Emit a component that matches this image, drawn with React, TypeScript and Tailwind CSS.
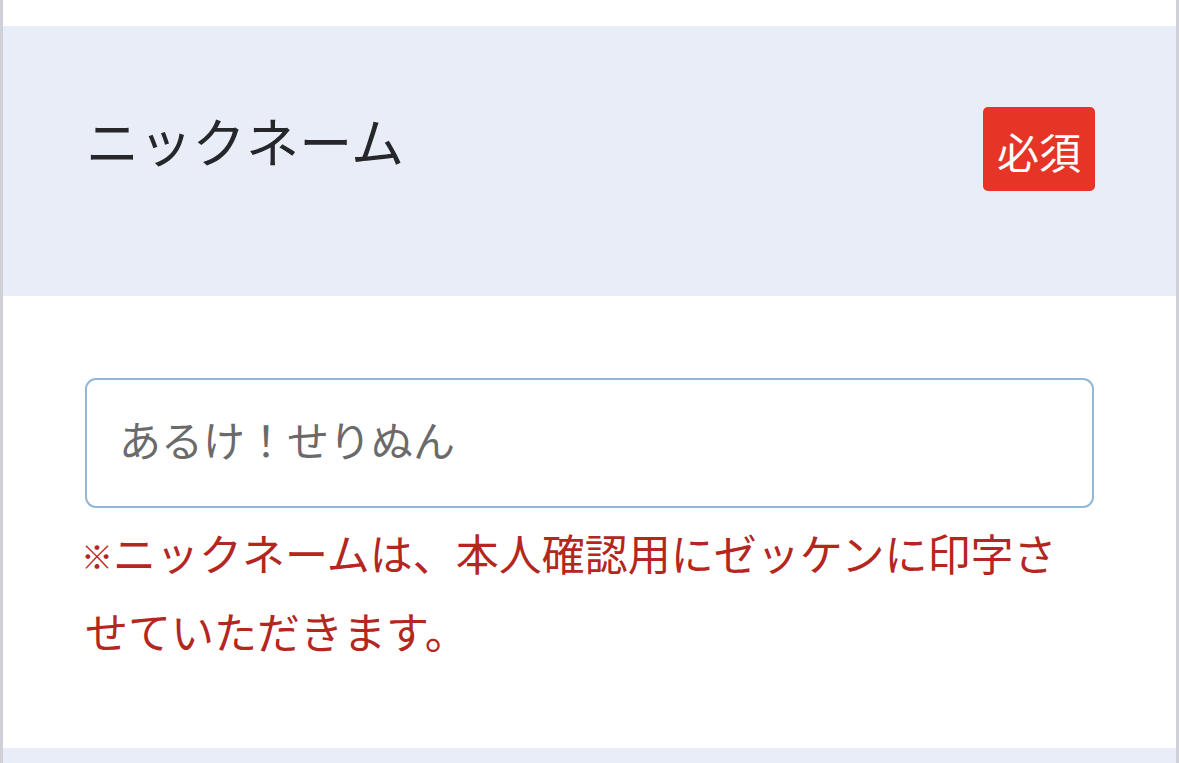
import React from "react";

export default function App() {
  return (
    <div
      className="w-[1179px] h-[763px] overflow-hidden bg-white flex flex-col border-l-[3px] border-r-[3px] border-[#cfd0d8]"
      style={{ fontFamily: '"Noto Sans CJK JP", "Noto Sans", sans-serif' }}
    >
      <div className="h-[26px] bg-white shrink-0" />
      <div className="h-[270px] shrink-0 bg-[#e9edf7] flex items-start justify-between pl-[83px] pr-[81px] pt-[81px]">
        <div className="h-[84px] flex items-center pb-[18px]">
          <span className="text-[53px] leading-none text-[#25272b] tracking-[0.3px]">ニックネーム</span>
        </div>
        <div className="w-[112px] h-[84px] bg-[#e63427] rounded-[5px] flex items-center justify-center">
          <span className="text-[42px] leading-none text-white pt-[4px]">必須</span>
        </div>
      </div>
      <div className="flex-1 bg-white px-[82px] pt-[82px]">
        <div className="h-[130px] border-2 border-[#93b7d6] rounded-[11px] flex items-center pl-[32px]">
          <span className="text-[42px] leading-none text-[#6a6a6a] pb-[8px]">あるけ！せりぬん</span>
        </div>
        <p className="mt-[7px] text-[43px] leading-[75px] text-[#b3271f] whitespace-nowrap">
          <span className="text-[32px] font-bold align-[2px] ml-[-4px]">※</span>ニックネームは、本人確認用にゼッケンに印字さ
          <br />
          せていただきます。
        </p>
      </div>
      <div className="h-[15px] shrink-0 bg-[#e9edf7]" />
    </div>
  );
}
